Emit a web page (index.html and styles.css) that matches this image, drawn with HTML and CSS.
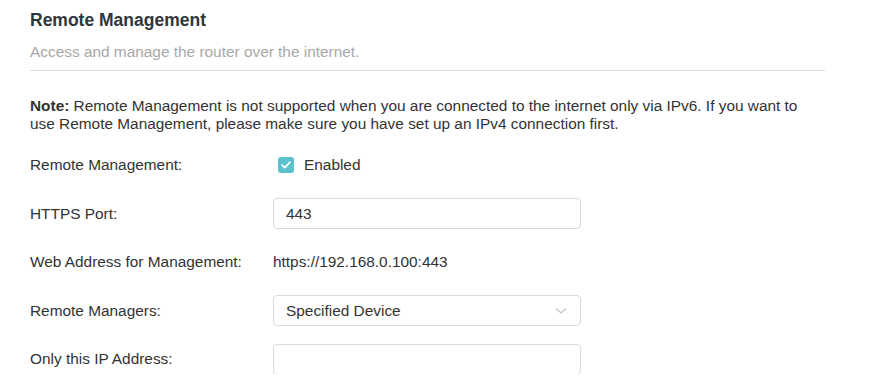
FILE: index.html
```html
<!DOCTYPE html>
<html>
<head>
<meta charset="utf-8">
<link rel="stylesheet" href="styles.css">
</head>
<body>
<div class="page">
  <h1 class="title">Remote Management</h1>
  <p class="subtitle">Access and manage the router over the internet.</p>
  <div class="divider"></div>
  <p class="note"><b>Note:</b> Remote Management is not supported when you are connected to the internet only via IPv6. If you want to use Remote Management, please make sure you have set up an IPv4 connection first.</p>
  <div class="form">
    <div class="row">
      <div class="label">Remote Management:</div>
      <div class="control">
        <span class="checkbox">
          <svg width="10" height="8" viewBox="0 0 10 8"><path d="M1.2 4.2 L3.8 6.6 L8.8 1.4" fill="none" stroke="#fff" stroke-width="1.8" stroke-linecap="round" stroke-linejoin="round"/></svg>
        </span>
        <span class="check-label">Enabled</span>
      </div>
    </div>
    <div class="row">
      <div class="label">HTTPS Port:</div>
      <div class="control"><div class="input">443</div></div>
    </div>
    <div class="row">
      <div class="label">Web Address for Management:</div>
      <div class="control"><span class="value">https://192.168.0.100:443</span></div>
    </div>
    <div class="row">
      <div class="label">Remote Managers:</div>
      <div class="control">
        <div class="input select">
          <span>Specified Device</span>
          <svg class="chev" width="12" height="8" viewBox="0 0 12 8"><path d="M1 1.5 L6 6 L11 1.5" fill="none" stroke="#c4c4c4" stroke-width="1.3"/></svg>
        </div>
      </div>
    </div>
    <div class="row">
      <div class="label">Only this IP Address:</div>
      <div class="control"><div class="input"></div></div>
    </div>
  </div>
</div>
</body>
</html>
```

FILE: styles.css
```css
html, body {
  margin: 0;
  padding: 0;
  background: #fff;
}
body {
  font-family: "Liberation Sans", Arial, sans-serif;
  font-size: 15.4px;
  color: #333;
}
.page {
  padding: 9px 0 0 30px;
  width: 795px;
}
.title {
  margin: 0;
  font-size: 17.5px;
  font-weight: bold;
  line-height: 22px;
  color: #2f363c;
}
.subtitle {
  margin: 12px 0 0;
  font-size: 15.4px;
  line-height: 18px;
  color: #a8a8a8;
}
.divider {
  margin-top: 9px;
  height: 1px;
  background: #dcdcdc;
}
.note {
  margin: 26px 0 0;
  line-height: 17.5px;
  color: #333;
}
.form {
  margin-top: 18px;
  display: flex;
  flex-direction: column;
  gap: 18.5px;
}
.row {
  display: flex;
  align-items: center;
  height: 30px;
}
.label {
  width: 243px;
  flex: none;
}
.control {
  display: flex;
  align-items: center;
}
.checkbox {
  width: 16px;
  height: 16px;
  margin-left: 5px;
  border-radius: 3px;
  background: #5bc1ce;
  display: flex;
  align-items: center;
  justify-content: center;
}
.check-label {
  margin-left: 10px;
}
.input {
  box-sizing: border-box;
  width: 308px;
  height: 31px;
  border: 1px solid #d9d9d9;
  border-radius: 4px;
  padding: 0 12px;
  display: flex;
  align-items: center;
  color: #333;
}
.select {
  justify-content: space-between;
}
.chev {
  margin-right: 1px;
}
```
